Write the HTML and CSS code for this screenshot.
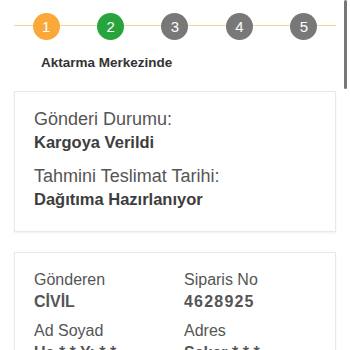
FILE: index.html
```html
<!DOCTYPE html>
<html>
<head>
<meta charset="utf-8">
<link rel="stylesheet" href="styles.css">
</head>
<body>
<div class="frame">
<div class="page">
  <div class="stepper">
    <div class="step"><span class="dot orange">1</span></div>
    <div class="step"><span class="dot green">2</span></div>
    <div class="step"><span class="dot gray">3</span></div>
    <div class="step"><span class="dot gray">4</span></div>
    <div class="step"><span class="dot gray">5</span></div>
  </div>
  <div class="status-label">Aktarma Merkezinde</div>

  <div class="card card-status">
    <div class="group">
      <div class="label">Gönderi Durumu:</div>
      <div class="value">Kargoya Verildi</div>
    </div>
    <div class="group">
      <div class="label">Tahmini Teslimat Tarihi:</div>
      <div class="value">Dağıtıma Hazırlanıyor</div>
    </div>
  </div>

  <div class="card card-info">
    <div class="cell">
      <div class="label2">Gönderen</div>
      <div class="value2">CİVİL</div>
    </div>
    <div class="cell">
      <div class="label2">Siparis No</div>
      <div class="value2 digits">4628925</div>
    </div>
    <div class="cell">
      <div class="label2">Ad Soyad</div>
      <div class="value2">Ua * * Y: * *</div>
    </div>
    <div class="cell">
      <div class="label2">Adres</div>
      <div class="value2">Sakar * * *</div>
    </div>
  </div>
</div>
<div class="rail"><div class="thumb"></div></div>
</div>
</body>
</html>
```

FILE: styles.css
```css
html, body {
  margin: 0;
  padding: 0;
  background: #ffffff;
}
html {
  height: 350px;
  overflow: hidden;
}
body {
  font-family: "Liberation Sans", Arial, Helvetica, sans-serif;
  color: #555555;
}
.frame {
  display: flex;
  width: 350px;
}
.page {
  width: 344px;
  flex: none;
  padding-top: 12px;
}
.rail {
  width: 3px;
  flex: none;
}
.thumb {
  width: 3px;
  height: 89px;
  border-radius: 2px;
  background-color: #777777;
}
.stepper {
  margin: 0 8px 0 14px;
  display: grid;
  grid-template-columns: repeat(5, 1fr);
  height: 28px;
  background-image: linear-gradient(#f6d39b, #f6d39b);
  background-repeat: no-repeat;
  background-size: 100% 1px;
  background-position: 0 13px;
}
.step {
  display: flex;
  justify-content: center;
  align-items: center;
}
.dot {
  width: 27px;
  height: 27px;
  border-radius: 50%;
  color: #ffffff;
  font-size: 15px;
  line-height: 27px;
  text-align: center;
}
.orange { background: #f8a93a; }
.green { background: #27a53c; }
.gray { background: #787878; }

.status-label {
  margin-top: 14px;
  margin-left: 41px;
  font-size: 13.5px;
  font-weight: bold;
  color: #333333;
  line-height: 17px;
}
.card {
  margin: 20px 8px 0 14px;
  border: 1px solid #e9e9e9;
  box-shadow: 0 1px 2px rgba(0,0,0,0.06);
  background: #ffffff;
}
.card-status {
  padding: 15px 19px 20px;
}
.group + .group {
  margin-top: 10px;
}
.label {
  font-size: 18px;
  line-height: 24px;
  color: #555555;
}
.value {
  font-size: 16.5px;
  font-weight: bold;
  line-height: 23px;
  color: #3d3d3d;
}
.card-info {
  display: grid;
  grid-template-columns: 150px 1fr;
  padding: 16px 19px;
  row-gap: 7px;
}
.label2 {
  font-size: 16px;
  line-height: 22px;
  color: #555555;
}
.value2 {
  font-size: 16px;
  font-weight: bold;
  line-height: 22px;
  color: #555555;
}
.digits {
  letter-spacing: 1.2px;
}
```
